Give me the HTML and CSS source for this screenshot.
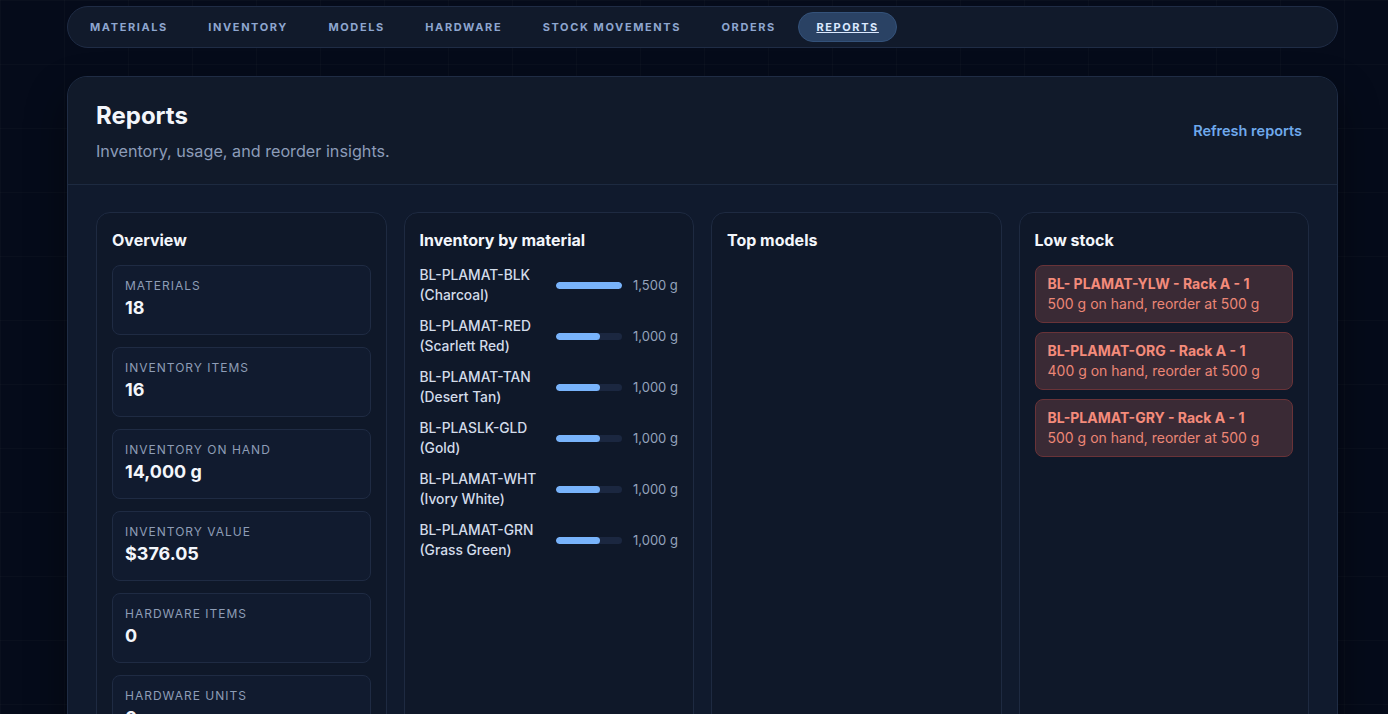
FILE: index.html
```html
<!DOCTYPE html>
<html lang="en">
  <head>
    <meta charset="UTF-8" />
    <meta name="viewport" content="width=device-width, initial-scale=1.0" />
    <title>Reports</title>
    <link rel="stylesheet" href="styles.css">
  </head>

  <body>
    <div class="page">
      <!-- Top navigation -->
      <nav class="topnav">
        <a href="#">Materials</a>
        <a href="#">Inventory</a>
        <a href="#">Models</a>
        <a href="#">Hardware</a>
        <a href="#">Stock Movements</a>
        <a href="#">Orders</a>
        <a href="#" class="active">Reports</a>
      </nav>

      <section class="panel">
        <header class="panel-head">
          <div>
            <h1>Reports</h1>
            <p class="subtitle">Inventory, usage, and reorder insights.</p>
          </div>
          <button class="link-btn">Refresh reports</button>
        </header>

        <div class="panel-body">
          <!-- Overview -->
          <div class="card">
            <h2>Overview</h2>
            <div class="stat">
              <div class="stat-label">Materials</div>
              <div class="stat-value">18</div>
            </div>
            <div class="stat">
              <div class="stat-label">Inventory items</div>
              <div class="stat-value">16</div>
            </div>
            <div class="stat">
              <div class="stat-label">Inventory on hand</div>
              <div class="stat-value">14,000 g</div>
            </div>
            <div class="stat">
              <div class="stat-label">Inventory value</div>
              <div class="stat-value">$376.05</div>
            </div>
            <div class="stat">
              <div class="stat-label">Hardware items</div>
              <div class="stat-value">0</div>
            </div>
            <div class="stat">
              <div class="stat-label">Hardware units</div>
              <div class="stat-value">0</div>
            </div>
            <div class="stat">
              <div class="stat-label">Open orders</div>
              <div class="stat-value">0</div>
            </div>
          </div>

          <!-- Inventory by material -->
          <div class="card">
            <h2>Inventory by material</h2>
            <div class="bars">
              <div class="bar-row">
                <div class="bar-label">BL-PLAMAT-BLK<br>(Charcoal)</div>
                <div class="track"><div class="fill" style="width: 100%"></div></div>
                <div class="bar-value">1,500 g</div>
              </div>
              <div class="bar-row">
                <div class="bar-label">BL-PLAMAT-RED<br>(Scarlett Red)</div>
                <div class="track"><div class="fill" style="width: 67%"></div></div>
                <div class="bar-value">1,000 g</div>
              </div>
              <div class="bar-row">
                <div class="bar-label">BL-PLAMAT-TAN<br>(Desert Tan)</div>
                <div class="track"><div class="fill" style="width: 67%"></div></div>
                <div class="bar-value">1,000 g</div>
              </div>
              <div class="bar-row">
                <div class="bar-label">BL-PLASLK-GLD<br>(Gold)</div>
                <div class="track"><div class="fill" style="width: 67%"></div></div>
                <div class="bar-value">1,000 g</div>
              </div>
              <div class="bar-row">
                <div class="bar-label">BL-PLAMAT-WHT<br>(Ivory White)</div>
                <div class="track"><div class="fill" style="width: 67%"></div></div>
                <div class="bar-value">1,000 g</div>
              </div>
              <div class="bar-row">
                <div class="bar-label">BL-PLAMAT-GRN<br>(Grass Green)</div>
                <div class="track"><div class="fill" style="width: 67%"></div></div>
                <div class="bar-value">1,000 g</div>
              </div>
            </div>
          </div>

          <!-- Top models -->
          <div class="card">
            <h2>Top models</h2>
          </div>

          <!-- Low stock -->
          <div class="card">
            <h2>Low stock</h2>
            <div class="alert">
              <div class="alert-title">BL- PLAMAT-YLW - Rack A - 1</div>
              <div>500 g on hand, reorder at 500 g</div>
            </div>
            <div class="alert">
              <div class="alert-title">BL-PLAMAT-ORG - Rack A - 1</div>
              <div>400 g on hand, reorder at 500 g</div>
            </div>
            <div class="alert">
              <div class="alert-title">BL-PLAMAT-GRY - Rack A - 1</div>
              <div>500 g on hand, reorder at 500 g</div>
            </div>
          </div>
        </div>
      </section>
    </div>
  </body>
</html>
```

FILE: styles.css
```css
/* Page */
body {
  margin: 0;
  font-family: Inter, "Noto Sans", sans-serif;
  color: #e6edf7;
  background-color: #050b1a;
  background-image:
    linear-gradient(rgba(255, 255, 255, 0.018) 1px, transparent 1px),
    linear-gradient(90deg, rgba(255, 255, 255, 0.018) 1px, transparent 1px);
  background-size: 64px 64px;
}

.page {
  margin: 0 50px 0 67px;
  padding-top: 6px;
}

/* Navigation */
.topnav {
  display: flex;
  align-items: center;
  gap: 4.5px;
  padding: 5px 4px;
  background-color: #111a2b;
  border: 1px solid #1f2c45;
  border-radius: 22px;
}

.topnav a {
  color: #8ea6cf;
  text-decoration: none;
  text-transform: uppercase;
  font-size: 11px;
  font-weight: 700;
  letter-spacing: 1.6px;
  padding: 7px 17px;
  line-height: 14px;
  border-radius: 16px;
  border: 1px solid transparent;
}

.topnav a.active {
  background-color: #2a4264;
  border-color: #34527a;
  color: #dbe9ff;
  text-decoration: underline;
}

/* Main panel */
.panel {
  margin-top: 28px;
  background-color: #101a2d;
  border: 1px solid #1f2c44;
  border-radius: 20px;
  box-shadow: 0 20px 40px rgba(0, 0, 0, 0.45);
  overflow: hidden;
}

.panel-head {
  display: flex;
  align-items: center;
  justify-content: space-between;
  padding: 24px 35px 21px 28px;
  background-color: #111a2a;
  border-bottom: 1px solid #1d2a40;
}

.panel-head h1 {
  margin: 0;
  font-size: 24px;
  line-height: 30px;
  font-weight: 700;
  color: #f3f6fb;
}

.subtitle {
  margin: 8px 0 0;
  font-size: 16.2px;
  line-height: 24px;
  color: #8c9cb8;
}

.link-btn {
  background: none;
  border: none;
  padding: 0;
  margin-bottom: 4px;
  font-family: inherit;
  font-size: 14.5px;
  font-weight: 600;
  color: #6fa9ec;
  cursor: pointer;
}

.panel-body {
  display: grid;
  grid-template-columns: repeat(4, 1fr);
  gap: 17px;
  padding: 27px 28px 28px;
}

/* Cards */
.card {
  background-color: #0f1829;
  border: 1px solid #1e2a41;
  border-radius: 14px;
  padding: 16px 15px 16px;
}

.card h2 {
  margin: 0 0 14px;
  font-size: 16px;
  line-height: 22px;
  font-weight: 700;
  color: #f3f6fb;
}

/* Overview stats */
.stat {
  box-sizing: border-box;
  height: 70px;
  background-color: #111b2f;
  border: 1px solid #1f2b43;
  border-radius: 8px;
  padding: 12px 12px;
  margin-bottom: 12px;
}

.stat-label {
  font-size: 12px;
  line-height: 16px;
  letter-spacing: 1px;
  text-transform: uppercase;
  color: #8e9db6;
}

.stat-value {
  margin-top: 2px;
  font-size: 18px;
  line-height: 24px;
  font-weight: 700;
  color: #f3f6fb;
}

/* Inventory bars */
.bars {
  display: flex;
  flex-direction: column;
  gap: 11px;
}

.bar-row {
  display: grid;
  grid-template-columns: 1fr 66px 45px;
  gap: 11px;
  align-items: center;
}

.bar-label {
  font-size: 13.8px;
  line-height: 20px;
  font-weight: 500;
  color: #d3dcea;
}

.track {
  height: 7px;
  border-radius: 4px;
  background-color: #1b2740;
  overflow: hidden;
}

.fill {
  height: 100%;
  border-radius: 4px;
  background-color: #78b3fb;
}

.bar-value {
  font-size: 13px;
  color: #94a3bc;
  white-space: nowrap;
}

/* Low stock alerts */
.alert {
  background-color: #3a2a35;
  border: 1px solid #693338;
  border-radius: 8px;
  padding: 8px 12px;
  margin-bottom: 9px;
  font-size: 14px;
  line-height: 20px;
  color: #ec8676;
}

.alert-title {
  font-weight: 700;
  color: #f48b7b;
}
```
